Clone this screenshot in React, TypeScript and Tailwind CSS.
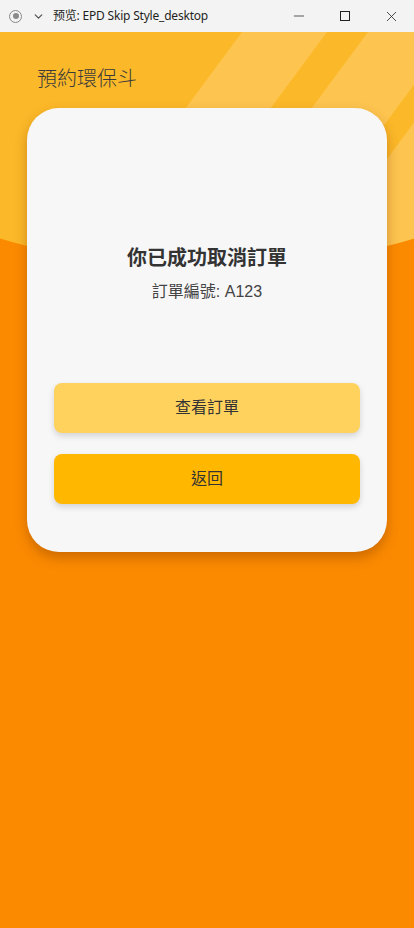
import { Minus, X, ChevronDown } from "lucide-react";

const cjk = "font-['Roboto','Noto_Sans_CJK_TC',sans-serif]";

function TitleBar() {
  return (
    <div className="h-[32px] bg-[#f3f3f3] flex items-center text-[#1f1f1f] relative z-10">
      <div className="w-[30px] flex justify-center pl-[1px]">
        <div className="w-[13px] h-[13px] rounded-full border border-[#8a8a8a] flex items-center justify-center">
          <div className="w-[6px] h-[6px] rounded-full bg-[#8a8a8a]" />
        </div>
      </div>
      <ChevronDown size={13} strokeWidth={2.4} className="text-[#555] ml-[2px]" />
      <span className="ml-[8px] text-[12px] font-['Noto_Sans','Noto_Sans_CJK_SC',sans-serif] tracking-[-0.2px]">
        预览: EPD Skip Style_desktop
      </span>
      <div className="ml-auto flex items-center">
        <div className="w-[46px] h-[32px] flex items-center justify-center">
          <Minus size={16} strokeWidth={1.1} />
        </div>
        <div className="w-[46px] h-[32px] flex items-center justify-center">
          <div className="w-[10px] h-[10px] border border-[#1f1f1f]" />
        </div>
        <div className="w-[46px] h-[32px] flex items-center justify-center">
          <X size={17} strokeWidth={1.1} />
        </div>
      </div>
    </div>
  );
}

function HeaderBackdrop() {
  // stripes run down-left at ~0.74 px across per px down
  const s = 0.74;
  const h = 240;
  const band = (a: number, b: number) =>
    `${a},0 ${b},0 ${b - s * h},${h} ${a - s * h},${h}`;
  return (
    <div className="absolute top-[32px] left-[-207px] w-[828px] h-[235px] overflow-hidden bg-[#fbb828] rounded-bl-[414px_212px] rounded-br-[414px_212px]">
      <svg
        className="absolute left-[207px] top-0"
        width="414"
        height="240"
        viewBox="0 0 414 240"
      >
        <polygon points={band(242, 327)} fill="#fdc44f" />
        <polygon points={band(368, 453)} fill="#fdc44f" />
        <polygon points={band(481, 620)} fill="#fdc44f" />
      </svg>
    </div>
  );
}

export default function App() {
  return (
    <div className={`relative w-[414px] h-[928px] bg-[#fb8a00] overflow-hidden ${cjk}`}>
      <TitleBar />
      <HeaderBackdrop />
      <div className="relative px-[27px]">
        <h1 className="pl-[10px] pt-[33px] text-[20px] leading-[28px] text-[#3a3a3a] font-light">
          預約環保斗
        </h1>
        <div className="mt-[15px] bg-[#f7f7f7] rounded-[32px] shadow-[0_6px_12px_rgba(120,50,0,0.35)] px-[27px] pt-[136px] pb-[48px]">
          <p className="text-center text-[20px] leading-[28px] font-bold text-[#333]">
            你已成功取消訂單
          </p>
          <p className="mt-[8px] text-center text-[16px] leading-[24px] text-[#444] font-['Liberation_Sans','Noto_Sans_CJK_TC',sans-serif]">
            訂單編號: A123
          </p>
          <button className="mt-[79px] w-full h-[50px] rounded-[8px] bg-[#ffd25e] text-[16px] text-[#333] shadow-[0_3px_6px_rgba(0,0,0,0.15)]">
            查看訂單
          </button>
          <button className="mt-[21px] w-full h-[50px] rounded-[8px] bg-[#ffb700] text-[16px] text-[#333] shadow-[0_3px_6px_rgba(0,0,0,0.15)]">
            返回
          </button>
        </div>
      </div>
    </div>
  );
}
